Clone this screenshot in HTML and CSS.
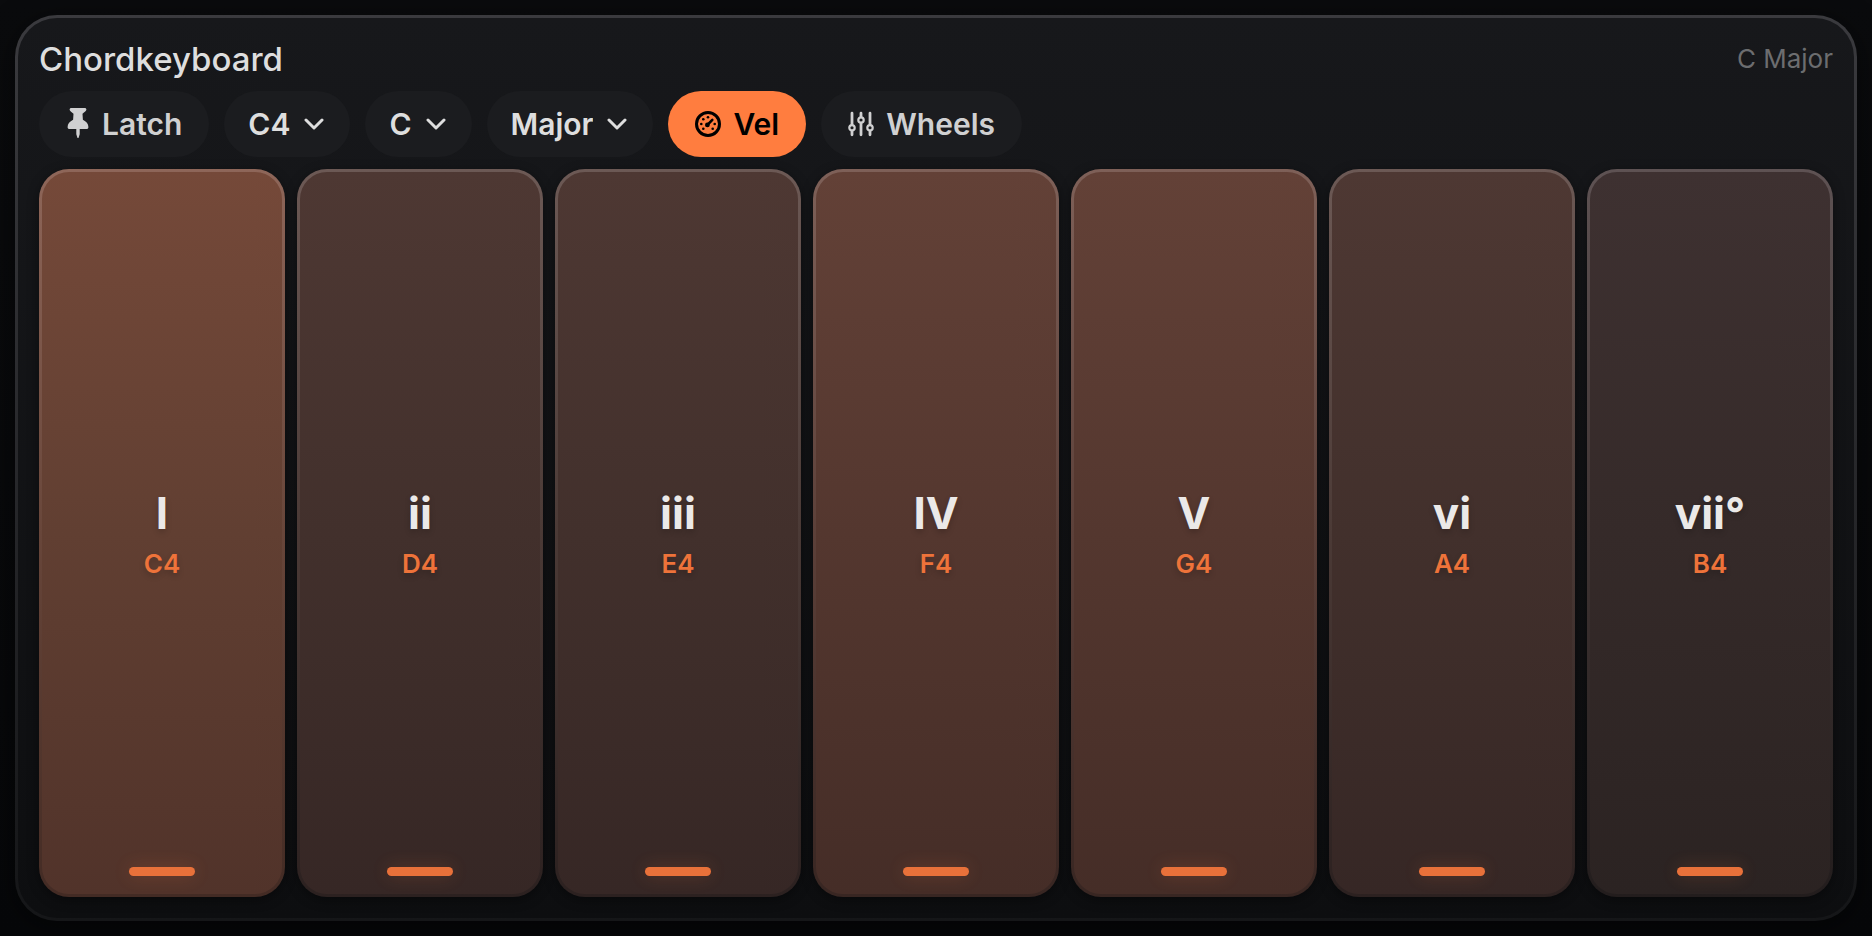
FILE: index.html
```
<!DOCTYPE html>
<html lang="en">
<head>
  <meta charset="UTF-8" />
  <meta name="viewport" content="width=device-width, initial-scale=1.0" />
  <title>Chordkeyboard</title>
  <link rel="stylesheet" href="styles.css">
</head>
<body>
  <main class="panel">
    <header class="header">
      <h1>Chordkeyboard</h1>
      <span class="scale-name">C Major</span>
    </header>

    <div class="toolbar">
      <button type="button" class="pill">
        <svg class="icon-pin" viewBox="0 0 24 30" width="24" height="30" aria-hidden="true">
          <path fill="currentColor" d="M5.5 0h13C19.8 0 20.4.7 20.4 1.6c0 1.2-1.8 2.8-3.9 4.1l.4 6.1c3.4 1.6 5.5 4.3 5.5 7.1 0 1.3-.7 2.1-2 2.1h-6.7v5.2L12.5 30h-1l-1.2-3.8V21H3.6c-1.3 0-2-.8-2-2.1 0-2.8 2.1-5.5 5.5-7.1l.4-6.1C5.4 4.4 3.6 2.8 3.6 1.6 3.6.7 4.2 0 5.5 0z"/>
        </svg>
        <span>Latch</span>
      </button>

      <div class="picker">
        <select aria-label="Octave">
          <option>C2</option>
          <option>C3</option>
          <option selected>C4</option>
          <option>C5</option>
        </select>
        <svg class="chevron" viewBox="0 0 20 12" width="20" height="12" aria-hidden="true"><path d="M2 2l8 8 8-8"/></svg>
      </div>

      <div class="picker">
        <select aria-label="Root note">
          <option selected>C</option>
          <option>D</option>
          <option>E</option>
          <option>F</option>
          <option>G</option>
          <option>A</option>
          <option>B</option>
        </select>
        <svg class="chevron" viewBox="0 0 20 12" width="20" height="12" aria-hidden="true"><path d="M2 2l8 8 8-8"/></svg>
      </div>

      <div class="picker">
        <select aria-label="Scale">
          <option selected>Major</option>
          <option>Minor</option>
        </select>
        <svg class="chevron" viewBox="0 0 20 12" width="20" height="12" aria-hidden="true"><path d="M2 2l8 8 8-8"/></svg>
      </div>

      <button type="button" class="pill active" aria-pressed="true">
        <svg viewBox="0 0 26 26" width="26" height="26" aria-hidden="true">
          <circle cx="13" cy="13" r="11.5" fill="none" stroke="currentColor" stroke-width="3"/>
          <path d="M12.2 14.2L17.3 8.9" stroke="currentColor" stroke-width="2.6" stroke-linecap="round"/>
          <circle cx="12.4" cy="13.9" r="2.4" fill="currentColor"/>
          <g fill="currentColor">
            <circle cx="13" cy="6.3" r="1.3"/>
            <circle cx="8.3" cy="8.3" r="1.3"/>
            <circle cx="6.3" cy="13" r="1.3"/>
            <circle cx="8.3" cy="17.7" r="1.3"/>
            <circle cx="19.7" cy="13" r="1.3"/>
            <circle cx="17.7" cy="17.7" r="1.3"/>
          </g>
        </svg>
        <span>Vel</span>
      </button>

      <button type="button" class="pill">
        <svg viewBox="0 0 26 26" width="26" height="26" aria-hidden="true">
          <g fill="none" stroke="currentColor" stroke-width="2.8" stroke-linecap="round">
            <path d="M4 2.2v11.4M4 20v3.8M13 2.2v3.6M13 12.2v11.6M22 2.2v11.4M22 20v3.8"/>
            <g stroke-width="2.2">
              <circle cx="4" cy="16.8" r="2.7"/>
              <circle cx="13" cy="9" r="2.7"/>
              <circle cx="22" cy="16.8" r="2.7"/>
            </g>
          </g>
        </svg>
        <span>Wheels</span>
      </button>
    </div>

    <div class="keys">
      <button type="button" class="key tonic"><span class="degree">I</span><span class="note">C4</span></button>
      <button type="button" class="key minor"><span class="degree">ii</span><span class="note">D4</span></button>
      <button type="button" class="key minor"><span class="degree">iii</span><span class="note">E4</span></button>
      <button type="button" class="key major"><span class="degree">IV</span><span class="note">F4</span></button>
      <button type="button" class="key major"><span class="degree">V</span><span class="note">G4</span></button>
      <button type="button" class="key minor"><span class="degree">vi</span><span class="note">A4</span></button>
      <button type="button" class="key dim"><span class="degree">vii°</span><span class="note">B4</span></button>
    </div>
  </main>
</body>
</html>
```
FILE: styles.css
```
* {
  margin: 0;
  padding: 0;
  box-sizing: border-box;
}
body {
  min-height: 100vh;
  display: flex;
  padding: 15px;
  background: linear-gradient(#0a0b0d, #060709);
  font-family: 'Inter', sans-serif;
  color: #dedede;
}
button, select {
  font: inherit;
  color: inherit;
  border: none;
  cursor: pointer;
}
.panel {
  flex: 1;
  display: flex;
  flex-direction: column;
  gap: 12px;
  padding: 21px;
  border: 3px solid transparent;
  border-radius: 42px;
  background:
    linear-gradient(#17181b, #0d0e10) padding-box,
    linear-gradient(#3a3a3e, #151618) border-box;
  box-shadow: 0 6px 30px rgba(0, 0, 0, 0.5);
}
.header {
  display: flex;
  align-items: center;
  justify-content: space-between;
  line-height: 40px;
}
.header h1 {
  font-size: 33px;
  font-weight: 500;
}
.scale-name {
  font-size: 26px;
  color: #6c6d6f;
}

/* toolbar */
.toolbar {
  display: flex;
  flex-wrap: wrap;
  gap: 15px;
  font-size: 30px;
  font-weight: 600;
}
.pill {
  display: flex;
  align-items: center;
  gap: 12px;
  height: 66px;
  padding: 0 27px;
  border-radius: 33px;
  background: #1b1c1f;
  color: #d0d0d1;
}
.pill.active {
  background: #ff7d3f;
  color: #000;
}
.icon-pin {
  margin-bottom: 2px;
}
.picker {
  display: grid;
  align-items: center;
}
.picker select,
.picker .chevron {
  grid-area: 1 / 1;
}
.picker select {
  appearance: none;
  field-sizing: content;
  height: 66px;
  padding: 0 60px 0 24px;
  border-radius: 33px;
  background: #1b1c1f;
}
.chevron {
  justify-self: end;
  margin-right: 26px;
  pointer-events: none;
  fill: none;
  stroke: currentColor;
  stroke-width: 3;
  stroke-linecap: round;
  stroke-linejoin: round;
}

/* chord keys */
.keys {
  flex: 1;
  display: grid;
  grid-template-columns: repeat(7, 1fr);
  gap: 12px;
}
.key {
  position: relative;
  display: flex;
  flex-direction: column;
  align-items: center;
  justify-content: center;
  gap: 8px;
  border: 3px solid transparent;
  border-radius: 30px;
  background:
    linear-gradient(var(--top), var(--mid), var(--bottom)) padding-box,
    linear-gradient(var(--edge-top), var(--edge-mid), var(--edge-bottom)) border-box;
  box-shadow: 0 3px 12px rgba(0, 0, 0, 0.4);
  text-shadow: 0 3px 6px rgba(0, 0, 0, 0.2);
}
.key::after {
  content: "";
  position: absolute;
  bottom: 18px;
  width: 66px;
  height: 9px;
  border-radius: 5px;
  background: #e8713a;
  box-shadow: 0 0 18px rgba(255, 125, 63, 0.2);
}
.tonic {
  --top: #754939;
  --mid: #613f32;
  --bottom: #51332a;
  --edge-top: #8e6659;
  --edge-mid: #68463a;
  --edge-bottom: #432b24;
}
.major {
  --top: #634137;
  --mid: #54372f;
  --bottom: #452d27;
  --edge-top: #7e6058;
  --edge-mid: #5c4039;
  --edge-bottom: #382622;
}
.minor {
  --top: #4e3833;
  --mid: #42302c;
  --bottom: #362725;
  --edge-top: #6c5955;
  --edge-mid: #4b3a36;
  --edge-bottom: #2c2120;
}
.dim {
  --top: #3e3131;
  --mid: #352a29;
  --bottom: #2b2322;
  --edge-top: #5e5253;
  --edge-mid: #3f3433;
  --edge-bottom: #231d1d;
}
.degree {
  font-size: 44px;
  font-weight: 700;
  line-height: 54px;
  color: #ebe9e8;
}
.note {
  font-size: 26px;
  font-weight: 600;
  line-height: 32px;
  color: #ee733a;
}
```
